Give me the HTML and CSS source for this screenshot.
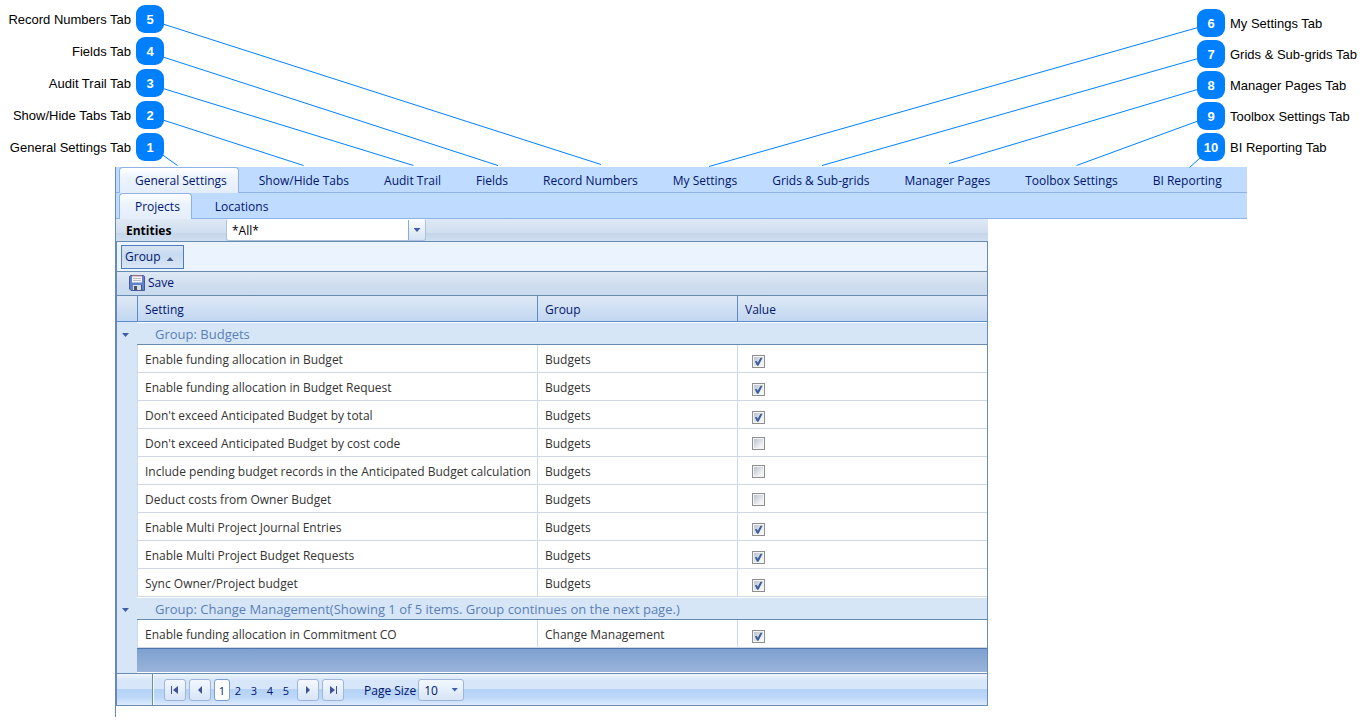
FILE: index.html
```html
<!DOCTYPE html>
<html lang="en">
<head>
<meta charset="utf-8">
<title>General Settings</title>
<link rel="stylesheet" href="styles.css">
</head>
<body>
<header class="callouts">
  <svg class="leaders" viewBox="0 0 1367 168" preserveAspectRatio="none" aria-hidden="true">
    <path d="M163 24 601 164.500M163 57 498 165.500M163 88.500 413.500 165.500M163 120 303.500 165.500M162 154.500 177.500 165.500M1198 27.500 709 166.500M1198 58.500 822 165.500M1198 89.300 949 163.500M1198 121 1076.500 165.500M1200 158 1189.500 167.500"/>
  </svg>
  <ol class="callout-list callout-left">
    <li><span>Record Numbers Tab</span><b>5</b></li>
    <li><span>Fields Tab</span><b>4</b></li>
    <li><span>Audit Trail Tab</span><b>3</b></li>
    <li><span>Show/Hide Tabs Tab</span><b>2</b></li>
    <li><span>General Settings Tab</span><b>1</b></li>
  </ol>
  <ol class="callout-list callout-right">
    <li><b>6</b><span>My Settings Tab</span></li>
    <li><b>7</b><span>Grids &amp; Sub-grids Tab</span></li>
    <li><b>8</b><span>Manager Pages Tab</span></li>
    <li><b>9</b><span>Toolbox Settings Tab</span></li>
    <li><b>10</b><span>BI Reporting Tab</span></li>
  </ol>
</header>

<main class="panel">
  <nav class="tabs">
    <a class="tab active" href="#">General Settings</a>
    <a class="tab" href="#">Show/Hide Tabs</a>
    <a class="tab" href="#">Audit Trail</a>
    <a class="tab" href="#">Fields</a>
    <a class="tab" href="#">Record Numbers</a>
    <a class="tab" href="#">My Settings</a>
    <a class="tab" href="#">Grids &amp; Sub-grids</a>
    <a class="tab" href="#">Manager Pages</a>
    <a class="tab" href="#">Toolbox Settings</a>
    <a class="tab" href="#">BI Reporting</a>
  </nav>
  <nav class="tabs subtabs">
    <a class="tab active" href="#">Projects</a>
    <a class="tab" href="#">Locations</a>
  </nav>

  <section class="content">
    <div class="entities">
      <label for="entity">Entities</label>
      <div class="combo">
        <input id="entity" type="text" value="*All*">
        <button type="button" aria-label="Open list"><i class="down"></i></button>
      </div>
    </div>

    <div class="grid">
      <div class="group-panel"><button type="button" class="group-chip">Group <i class="up"></i></button></div>
      <div class="toolbar">
        <button type="button" class="save">
          <svg width="16" height="16" viewBox="0 0 16 16" aria-hidden="true">
            <path d="M.5 1.500 1.500.5h13l1 1v14H2L.5 14z" fill="#5f82cc" stroke="#47599a"/>
            <path d="M3 1h10v6.500H3z" fill="#f6f4f4"/><path d="M3 .5h10v1H3z" fill="#d58e91"/>
            <path d="M4 3.500h8M4 5.500h8" stroke="#bcbcc4"/>
            <path d="M4 10h8v5H4z" fill="#d9dce0"/><path d="M5 11h3v4H5z" fill="#4b5363"/>
            <path d="M12 10h1v5h-1z" fill="#3e5089"/>
          </svg>Save</button>
      </div>
      <table>
        <colgroup><col class="c-exp"><col class="c-set"><col class="c-grp"><col></colgroup>
        <thead><tr><th></th><th>Setting</th><th>Group</th><th>Value</th></tr></thead>
        <tbody>
          <tr class="group"><td><button type="button" aria-label="Collapse"><i class="down"></i></button></td><td colspan="3">Group: Budgets</td></tr>
          <tr><td></td><td>Enable funding allocation in Budget</td><td>Budgets</td><td><input type="checkbox" aria-label="Enable funding allocation in Budget" checked></td></tr>
          <tr><td></td><td>Enable funding allocation in Budget Request</td><td>Budgets</td><td><input type="checkbox" aria-label="Enable funding allocation in Budget Request" checked></td></tr>
          <tr><td></td><td>Don't exceed Anticipated Budget by total</td><td>Budgets</td><td><input type="checkbox" aria-label="Don't exceed Anticipated Budget by total" checked></td></tr>
          <tr><td></td><td>Don't exceed Anticipated Budget by cost code</td><td>Budgets</td><td><input type="checkbox" aria-label="Don't exceed Anticipated Budget by cost code"></td></tr>
          <tr><td></td><td>Include pending budget records in the Anticipated Budget calculation</td><td>Budgets</td><td><input type="checkbox" aria-label="Include pending budget records in the Anticipated Budget calculation"></td></tr>
          <tr><td></td><td>Deduct costs from Owner Budget</td><td>Budgets</td><td><input type="checkbox" aria-label="Deduct costs from Owner Budget"></td></tr>
          <tr><td></td><td>Enable Multi Project Journal Entries</td><td>Budgets</td><td><input type="checkbox" aria-label="Enable Multi Project Journal Entries" checked></td></tr>
          <tr><td></td><td>Enable Multi Project Budget Requests</td><td>Budgets</td><td><input type="checkbox" aria-label="Enable Multi Project Budget Requests" checked></td></tr>
          <tr><td></td><td>Sync Owner/Project budget</td><td>Budgets</td><td><input type="checkbox" aria-label="Sync Owner/Project budget" checked></td></tr>
          <tr class="group"><td><button type="button" aria-label="Collapse"><i class="down"></i></button></td><td colspan="3">Group: Change Management(Showing 1 of 5 items. Group continues on the next page.)</td></tr>
          <tr><td></td><td>Enable funding allocation in Commitment CO</td><td>Change Management</td><td><input type="checkbox" aria-label="Enable funding allocation in Commitment CO" checked></td></tr>
        </tbody>
        <tfoot><tr><td></td><td colspan="3"></td></tr></tfoot>
      </table>
      <div class="pager">
        <div class="pager-gutter"></div>
        <div class="pages">
          <button type="button" class="nav" aria-label="First page"><svg width="8" height="8" viewBox="0 0 8 8"><path d="M0 0h1v8H0zM7 0v8L2 4z"/></svg></button>
          <button type="button" class="nav" aria-label="Previous page"><svg width="4" height="8" viewBox="0 0 4 8"><path d="M4 0v8L0 4z"/></svg></button>
          <a class="page current" href="#">1</a>
          <a class="page" href="#">2</a><a class="page" href="#">3</a><a class="page" href="#">4</a><a class="page" href="#">5</a>
          <button type="button" class="nav" aria-label="Next page"><svg width="4" height="8" viewBox="0 0 4 8"><path d="M0 0v8l4-4z"/></svg></button>
          <button type="button" class="nav" aria-label="Last page"><svg width="8" height="8" viewBox="0 0 8 8"><path d="M1 0v8l5-4zM7 0h1v8H7z"/></svg></button>
        </div>
        <label for="size">Page Size</label>
        <div class="size"><select id="size"><option>10</option><option>20</option><option>50</option></select><i class="down"></i></div>
      </div>
    </div>
  </section>
</main>
</body>
</html>
```
FILE: styles.css
```css
* { box-sizing: border-box; }
body {
  margin: 0;
  background: #fff;
  color: #333;
  font: 12px/16px "Open Sans", "Noto Sans", sans-serif;
}
button, input, select { font: inherit; color: inherit; margin: 0; padding: 0; border: 0; background: none; }
a { color: inherit; text-decoration: none; }

/* Numbered callouts */
.callouts {
  position: relative;
  display: flex;
  justify-content: space-between;
  height: 167px;
  color: #000;
  font: 13px/28px "Liberation Sans", Arial, sans-serif;
}
.leaders { position: absolute; left: 0; top: 0; width: 100%; height: 168px; z-index: 1; }
.leaders path { fill: none; stroke: #0080ff; stroke-width: 1; }
.callout-list {
  position: relative;
  z-index: 2;
  display: flex;
  flex-direction: column;
  list-style: none;
  margin: 0;
  padding: 0;
}
.callout-list li { display: flex; gap: 5px; height: 28px; line-height: 30px; }
.callout-list b {
  width: 28px;
  height: 28px;
  border-radius: 9px;
  background: #0080ff;
  color: #fff;
  text-align: center;
}
.callout-left { width: 164px; padding-top: 5px; gap: 4px; }
.callout-left li { justify-content: flex-end; }
.callout-right { width: 170px; padding-top: 9px; gap: 3px; }

/* Tab strips */
.panel { margin-left: 115px; border-left: 1px solid #6788be; padding-bottom: 11px; color: #00156e; }
.tabs {
  display: flex;
  gap: 1px;
  height: 26px;
  margin-right: 120px;
  padding-left: 3px;
  background: #bfdbff;
  border-bottom: 1px solid #8db2e3;
}
.subtabs { gap: 4px; }
.tab { height: 25px; padding: 0 17px; line-height: 28px; white-space: nowrap; }
.tab.active {
  height: 26px;
  margin-right: 2px;
  padding: 0 11px 0 15px;
  border: 1px solid #8db2e3;
  border-bottom: 0;
  border-radius: 4px 4px 0 0;
  background: linear-gradient(#fff, #ebf3fe 40%, #e4eefb);
  line-height: 26px;
}

.content { margin-right: 379px; }
.entities {
  display: flex;
  align-items: center;
  height: 22px;
  padding-left: 10px;
  background: linear-gradient(#dfe9f5, #d0deef 63%, #c5d6e9 64%, #cfdff0);
}
.entities label { width: 100px; padding-top: 2px; color: #000; font-weight: bold; }
.combo { display: flex; width: 200px; height: 22px; border: 1px solid #abc1de; border-top-color: #fff; border-radius: 3px; overflow: hidden; }
.combo input { flex: 1; min-width: 0; padding: 1px 0 0 5px; background: #fff; color: #000; }
.combo button { display: grid; place-items: center; width: 17px; border-left: 1px solid #8ba9d2; background: linear-gradient(#f8fbff, #d5e3f5); }
.down { display: block; width: 7px; height: 4px; background: #3f5cab; clip-path: polygon(0 0, 100% 0, 50% 100%); }
.up { display: block; width: 7px; height: 4px; background: #4b5f8f; clip-path: polygon(50% 0, 100% 100%, 0 100%); }

/* Settings grid */
.grid { border: 1px solid #688caf; border-left-color: #6788be; }
.group-panel { height: 29px; padding: 3px 4px; background: #ebf3fe; }
.group-chip {
  display: flex;
  align-items: center;
  gap: 6px;
  height: 24px;
  padding: 0 9px 0 3px;
  border: 1px solid #4f7cba;
  background: linear-gradient(#d9e5f4, #c8daef 40%, #d9e6f6);
}
.group-chip .up { margin-top: 4px; }
.toolbar {
  height: 25px;
  padding-left: 12px;
  border: solid #688caf;
  border-width: 1px 0;
  background: linear-gradient(#dfe9f5, #d0deef 50%, #c9dbee);
}
.save { display: flex; align-items: center; gap: 3px; height: 22px; }

table { width: 100%; table-layout: fixed; border-collapse: separate; border-spacing: 0; color: #333; }
.c-exp { width: 20px; }
.c-set { width: 400px; }
.c-grp { width: 200px; }
th, td { padding: 0; text-align: left; }
th {
  height: 26px;
  padding: 3px 0 0 7px;
  border-left: 1px solid #5d8cc9;
  border-bottom: 1px solid #5d8cc9;
  background: linear-gradient(#dfe9f5, #c2d7f2);
  color: #00156e;
  font-weight: normal;
}
th:first-child { border-left: 0; }
tbody td { height: 28px; padding: 2px 0 0 7px; border-left: 1px solid #d0d7e5; border-bottom: 1px solid #d0d7e5; }
tbody td:first-child, tfoot td:first-child { border: 0; padding: 0; background: #d7e6f7; }
tbody .group td {
  height: 23px;
  padding: 1px 0 0 18px;
  border-left: 0;
  border-top: 1px solid #fff;
  border-bottom: 1px solid #688caf;
  background: #d7e6f7;
  color: #5a7fb8;
  font-size: 13px;
}
tbody .group td:first-child { padding: 0; border: 0; }
.group button { display: grid; place-items: center; width: 17px; height: 16px; margin-top: 3px; }
tfoot td { height: 25px; border-top: 1px solid #4e76ac; border-bottom: 1px solid #fff; background: linear-gradient(#7ea0d0, #9ab4da); }

input[type="checkbox"] {
  appearance: none;
  display: grid;
  width: 13px;
  height: 13px;
  margin: 0 0 0 7px;
  border: 1px solid #8e8f8f;
  background: linear-gradient(135deg, #b9c2cd, #f4f4f5 80%) content-box content-box no-repeat, #f4f4f4;
  padding: 1px;
}
input[type="checkbox"]:checked { margin-top: 4px; }
input[type="checkbox"]:checked::before {
  content: "";
  background: #3d5f9c;
  clip-path: polygon(10% 50%, 28% 42%, 42% 62%, 72% 8%, 95% 8%, 50% 96%, 34% 96%);
}

.pager {
  display: flex;
  align-items: center;
  height: 32px;
  border-top: 1px solid #688caf;
  background: linear-gradient(#eef5fe, #d7e6f9 20%, #d7e6f9 48%, #b4d2f7 49%, #bdd7f8 75%, #dceafb);
  color: #00156e;
}
.pager-gutter { align-self: stretch; width: 36px; margin-right: 11px; border-right: 1px solid #688caf; box-shadow: 1px 0 #fff; }
.pages { display: flex; gap: 3px; align-items: center; margin-right: 20px; font-size: 11px; }
.nav { display: grid; place-items: center; width: 22px; height: 22px; border: 1px solid #9fb6d8; border-radius: 3px; background: linear-gradient(#f3f8ff, #d7e5f8); }
.nav path { fill: #3f5296; }
.page { width: 13px; height: 22px; padding-right: 3px; line-height: 24px; text-align: center; }
.page.current { width: 16px; padding: 0; border: 1px solid #7b9fd2; border-radius: 3px; background: #fff; line-height: 22px; }
.pager label { padding-top: 2px; }
.size { position: relative; width: 46px; margin-left: 2px; }
.size select { appearance: none; display: block; width: 100%; height: 22px; padding: 2px 0 0 5px; border: 1px solid #9fb6d8; border-radius: 3px; background: linear-gradient(#f3f8ff, #d7e5f8); }
.size .down { position: absolute; right: 6px; top: 9px; pointer-events: none; }
```
